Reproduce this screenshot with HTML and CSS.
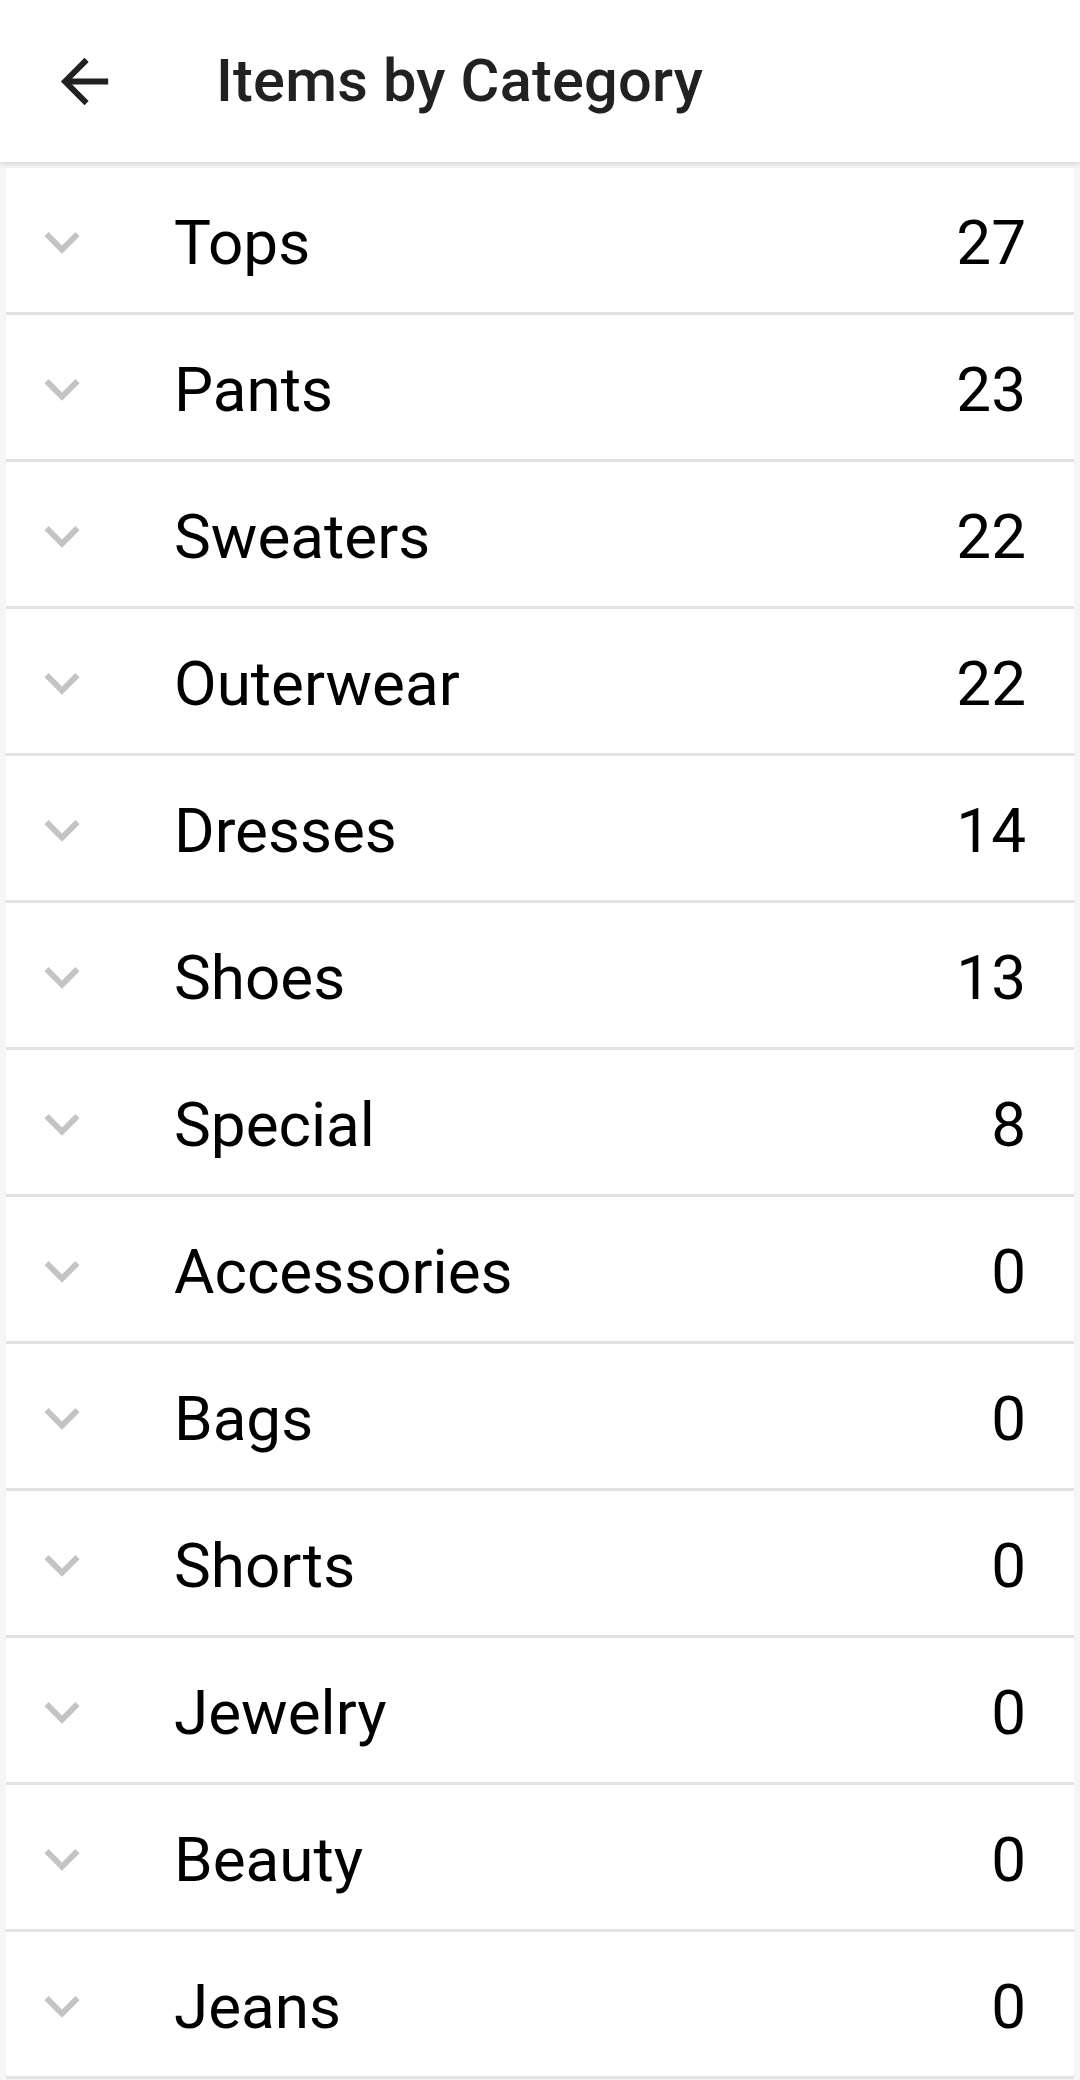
FILE: index.html
```html
<!DOCTYPE html>
<html lang="en">
<head>
    <meta charset="UTF-8">
    <title>Items by Category</title>
    <meta name="viewport" content="width=device-width, initial-scale=1">
    <link rel="stylesheet" href="styles.css">
</head>
<body>
    <header class="toolbar">
      <button class="back" aria-label="Back">
        <svg viewBox="0 0 24 24" width="71" height="71"><path d="M20 11H7.83l5.59-5.59L12 4l-8 8 8 8 1.41-1.41L7.83 13H20v-2z"/></svg>
      </button>
      <h1>Items by Category</h1>
    </header>
    <ul class="categories">
      <li class="row"><span class="chev"></span><span class="name">Tops</span><span class="count">27</span></li>
      <li class="row"><span class="chev"></span><span class="name">Pants</span><span class="count">23</span></li>
      <li class="row"><span class="chev"></span><span class="name">Sweaters</span><span class="count">22</span></li>
      <li class="row"><span class="chev"></span><span class="name">Outerwear</span><span class="count">22</span></li>
      <li class="row"><span class="chev"></span><span class="name">Dresses</span><span class="count">14</span></li>
      <li class="row"><span class="chev"></span><span class="name">Shoes</span><span class="count">13</span></li>
      <li class="row"><span class="chev"></span><span class="name">Special</span><span class="count">8</span></li>
      <li class="row"><span class="chev"></span><span class="name">Accessories</span><span class="count">0</span></li>
      <li class="row"><span class="chev"></span><span class="name">Bags</span><span class="count">0</span></li>
      <li class="row"><span class="chev"></span><span class="name">Shorts</span><span class="count">0</span></li>
      <li class="row"><span class="chev"></span><span class="name">Jewelry</span><span class="count">0</span></li>
      <li class="row"><span class="chev"></span><span class="name">Beauty</span><span class="count">0</span></li>
      <li class="row"><span class="chev"></span><span class="name">Jeans</span><span class="count">0</span></li>
    </ul>
    <script>
      // same chevron in every row
      const chevron = '<svg viewBox="0 0 24 24" width="70" height="70"><path d="M16.59 8.59L12 13.17 7.41 8.59 6 10l6 6 6-6z"/></svg>';
      document.querySelectorAll('.chev').forEach(el => el.innerHTML = chevron);
    </script>
</body>
</html>
```

FILE: styles.css
```css
body {
  font-family: Roboto, 'Liberation Sans', Arial, sans-serif;
  background: #f6f6f6;
  margin: 0;
  padding: 0;
  color: #000;
}
.toolbar {
  position: relative;
  z-index: 1;
  height: 162px;
  background: #fff;
  display: flex;
  align-items: center;
  box-shadow: 0 2px 6px rgba(0,0,0,0.14);
}
.back {
  background: none;
  border: none;
  padding: 0;
  margin: 0 0 0 49px;
  width: 71px;
  height: 71px;
  display: flex;
  fill: #212121;
}
.toolbar h1 {
  margin: 0 0 0 96px;
  font-size: 59.5px;
  font-weight: 500;
  color: #212121;
  letter-spacing: 0.2px;
}
.categories {
  list-style: none;
  margin: 0 6px;
  padding: 6px 0 0 0;
}
.row {
  background: #fff;
  border-bottom: 3px solid #e2e2e2;
  display: flex;
  align-items: center;
  padding: 4px 48px 0 21px;
  height: 140px;
}
.chev {
  width: 70px;
  height: 70px;
  display: flex;
  fill: #c4c4c4;
}
.name {
  margin-left: 77px;
  font-size: 62px;
  flex: 1;
}
.count {
  font-size: 62px;
}
```
